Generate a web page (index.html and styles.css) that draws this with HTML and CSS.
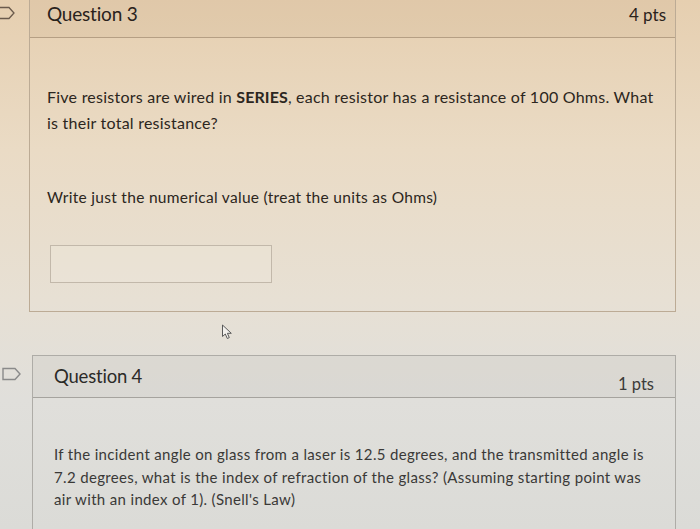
FILE: index.html
```html
<!DOCTYPE html>
<html>
<head>
<meta charset="utf-8">
<link rel="stylesheet" href="styles.css">
</head>
<body>
<div class="page">
  <div class="qrow q3row">
    <svg class="flag flag3" width="16" height="14" viewBox="0 0 16 14"><path d="M-2 1.5 H9 L14 7 L9 12.5 H-2" fill="none" stroke="#6a5a4c" stroke-width="1.3"/></svg>
    <div class="card card3">
      <div class="head head3">
        <span class="title">Question 3</span>
        <span class="pts">4 pts</span>
      </div>
      <div class="body body3">
        <p class="ptext">Five resistors are wired in <b>SERIES</b>, each resistor has a resistance of 100 Ohms. What is their total resistance?</p>
        <p class="ptext hint">Write just the numerical value (treat the units as Ohms)</p>
        <div class="answer"></div>
      </div>
    </div>
  </div>
  <div class="cursor-zone">
    <svg class="cursor" width="14" height="16" viewBox="0 0 14 16"><path d="M1.5 1 L1.5 12.5 L4.3 10 L6.3 14.5 L8.3 13.6 L6.4 9.3 L10.3 9.3 Z" fill="#f2f0ec" stroke="#5a5a5a" stroke-width="1"/></svg>
  </div>
  <div class="qrow q4row">
    <svg class="flag flag4" width="22" height="14" viewBox="0 0 22 14"><path d="M2 1.5 H14 L19 7 L14 12.5 H2 Z" fill="none" stroke="#8a8a8a" stroke-width="1.4"/></svg>
    <div class="card card4">
      <div class="head head4">
        <span class="title t4">Question 4</span>
        <span class="pts p4">1 pts</span>
      </div>
      <div class="body body4">
        <p class="q4text">If the incident angle on glass from a laser is 12.5 degrees, and the transmitted angle is 7.2 degrees, what is the index of refraction of the glass? (Assuming starting point was air with an index of 1). (Snell's Law)</p>
      </div>
    </div>
  </div>
</div>
</body>
</html>
```
FILE: styles.css
```css
html, body {
  margin: 0;
  padding: 0;
}
body {
  width: 700px;
  height: 529px;
  overflow: hidden;
  font-family: Lato, "Open Sans", sans-serif;
  background: linear-gradient(180deg, #e6cfb0 0px, #eadbc5 150px, #e7e0d4 300px, #e0dfdb 400px, #dbdbd7 529px);
}
.page {
  display: flex;
  flex-direction: column;
}
.qrow {
  position: relative;
}
.flag {
  position: absolute;
}
.flag3 { left: 0; top: 6px; }
.flag4 { left: 1px; top: 12px; }
.card {
  border: 1px solid #b9ab9a;
}
.card3 {
  margin-left: 29px;
  width: 645px;
  height: 311px;
  border-top: none;
  border-color: #bcab95;
}
.head {
  display: flex;
  justify-content: space-between;
}
.head3 {
  height: 38px;
  background: rgba(180, 150, 110, 0.1);
  border-bottom: 1px solid #b59f84;
  align-items: flex-start;
  padding: 2px 9px 0 17px;
  box-sizing: border-box;
}
.title {
  font-size: 19px;
  color: #2a221c;
  letter-spacing: -0.2px;
}
.pts {
  font-size: 17px;
  color: #2a221c;
  margin-top: 2px;
}
.body3 {
  padding: 46px 16px 0 17px;
  height: 272px;
  box-sizing: border-box;
}
.ptext {
  margin: 0;
  font-size: 16px;
  line-height: 26px;
  color: #2c2620;
  letter-spacing: 0.24px;
}
.ptext b {
  font-weight: 700;
  letter-spacing: 0.1px;
}
.hint {
  margin-top: 48px;
  font-size: 15.5px;
  letter-spacing: 0.3px;
}
.answer {
  margin-top: 35px;
  margin-left: 3px;
  width: 220px;
  height: 36px;
  border: 1px solid #c2b8aa;
  background: rgba(255, 252, 245, 0.12);
}
.cursor-zone {
  height: 43px;
  position: relative;
}
.cursor {
  position: absolute;
  left: 221px;
  top: 12px;
}
.card4 {
  margin-left: 32px;
  width: 642px;
  height: 190px;
  border-color: #aeaca7;
}
.head4 {
  height: 42px;
  background: rgba(160, 160, 155, 0.1);
  border-bottom: 1px solid #a5a39e;
  padding: 9px 21px 0 21px;
  box-sizing: border-box;
  align-items: flex-start;
}
.t4 {
  font-size: 18.5px;
  color: #2b2a28;
}
.p4 {
  font-size: 16.5px;
  color: #3c3b39;
  margin-top: 9px;
}
.body4 {
  padding: 45px 28px 0 21px;
}
.q4text {
  margin: 0;
  font-size: 15px;
  line-height: 22.5px;
  color: #3a3937;
  letter-spacing: 0.34px;
}
```
